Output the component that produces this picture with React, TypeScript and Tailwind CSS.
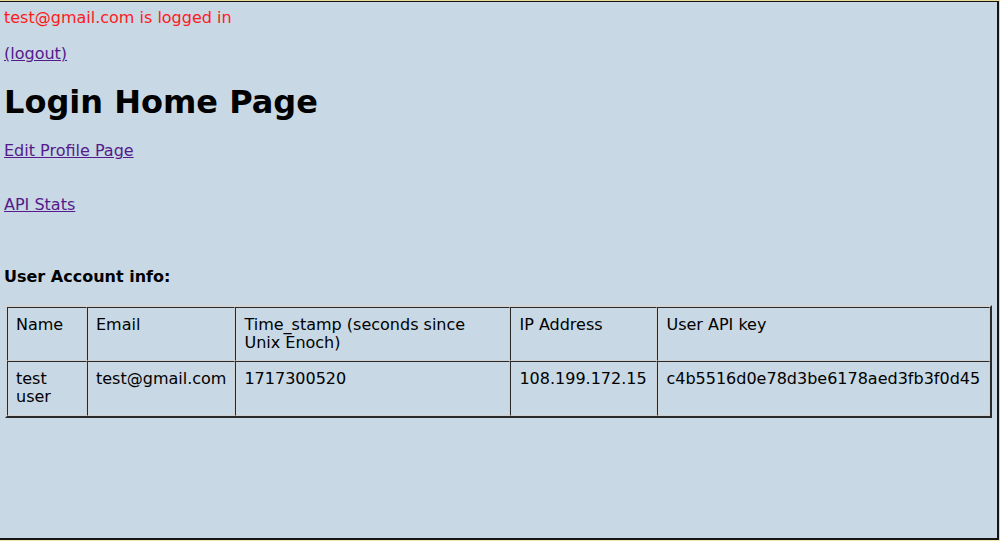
import React from "react";

const cellBase =
  "align-top text-left font-normal px-[8px] pt-[8px] pb-[8px] border border-t-[#2a2a2a] border-l-[#2a2a2a] border-r-[#d0d0d0] border-b-[#d0d0d0] leading-[18px]";

export default function App() {
  return (
    <div
      className="w-[1000px] h-[541px] flex flex-col overflow-hidden text-black"
      style={{ fontFamily: '"DejaVu Sans", Verdana, sans-serif' }}
    >
      <div className="h-px bg-[#e9d99a]" />
      <div className="flex-1 flex flex-row min-h-0">
        <div className="flex-1 bg-[#c8d8e4] border-t border-r-2 border-b-2 border-[#151515] pl-[4px] pt-[6px] text-[16px]">
          <p className="leading-[19px] text-[#ff1a1a]">test@gmail.com is logged in</p>
          <p className="mt-[17px] leading-[19px]">
            <a href="#" className="text-[#551a8b] underline">(logout)</a>
          </p>
          <h1 className="mt-[21px] text-[32px] font-bold leading-[37px]">Login Home Page</h1>
          <p className="mt-[20px] leading-[19px]">
            <a href="#" className="text-[#551a8b] underline">Edit Profile Page</a>
          </p>
          <p className="mt-[35px] leading-[19px]">
            <a href="#" className="text-[#551a8b] underline">API Stats</a>
          </p>
          <p className="mt-[53px] leading-[19px] font-bold">User Account info:</p>
          <table className="mt-[19px] ml-px border-separate border-spacing-0 border-2 border-t-[#d4d4d4] border-l-[#d4d4d4] border-r-[#2a2a2a] border-b-[#2a2a2a] w-[987px]">
            <tbody>
              <tr className="h-[54px]">
                <th className={`${cellBase} w-[80px]`}>Name</th>
                <th className={`${cellBase} w-[148px]`}>Email</th>
                <th className={`${cellBase} w-[275px]`}>Time_stamp (seconds since Unix Enoch)</th>
                <th className={`${cellBase} w-[147px]`}>IP Address</th>
                <th className={`${cellBase}`}>User API key</th>
              </tr>
              <tr className="h-[55px]">
                <td className={cellBase}>test user</td>
                <td className={cellBase}>test@gmail.com</td>
                <td className={cellBase}>1717300520</td>
                <td className={cellBase}>108.199.172.15</td>
                <td className={cellBase}>c4b5516d0e78d3be6178aed3fb3f0d45</td>
              </tr>
            </tbody>
          </table>
        </div>
        <div className="w-px bg-[#dcd0e2]" />
      </div>
      <div className="h-px bg-[#f3e9a6]" />
    </div>
  );
}
